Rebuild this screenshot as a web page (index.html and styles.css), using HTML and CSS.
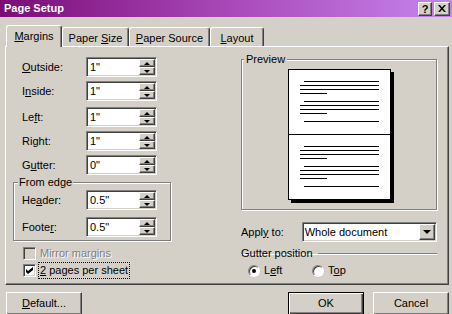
FILE: index.html
```html
<!DOCTYPE html>
<html lang="en">
<head>
    <meta charset="UTF-8">
    <meta name="viewport" content="width=device-width, initial-scale=1.0">
    <title>Page Setup</title>
    <link rel="stylesheet" href="styles.css">
</head>
<body>
    <div class="titlebar">
        <span class="title">Page Setup</span>
        <div class="caption-buttons">
            <span class="caption-btn help">?</span>
            <span class="caption-btn close">
                <svg width="8" height="7" viewBox="0 0 8 7"><path d="M0 0h2l2 2.5L6 0h2L5 3.5 8 7H6L4 4.5 2 7H0l3-3.5z" fill="#000"/></svg>
            </span>
        </div>
    </div>

    <div class="tabs">
        <div class="tab active tab-margins"><u>M</u>argins</div>
        <div class="tab tab-size">Paper <u>S</u>ize</div>
        <div class="tab tab-source"><u>P</u>aper Source</div>
        <div class="tab tab-layout"><u>L</u>ayout</div>
    </div>

    <div class="panel">
        <!-- Left column: margin fields -->
        <div class="col-left">
            <div class="field">
                <label><u>O</u>utside:</label>
                <div class="spin"><span class="spin-value">1"</span><span class="spin-btns"><span class="up"></span><span class="down"></span></span></div>
            </div>
            <div class="field">
                <label>I<u>n</u>side:</label>
                <div class="spin"><span class="spin-value">1"</span><span class="spin-btns"><span class="up"></span><span class="down"></span></span></div>
            </div>
            <div class="field field-wide">
                <label>Le<u>f</u>t:</label>
                <div class="spin"><span class="spin-value">1"</span><span class="spin-btns"><span class="up"></span><span class="down"></span></span></div>
            </div>
            <div class="field">
                <label>Ri<u>g</u>ht:</label>
                <div class="spin"><span class="spin-value">1"</span><span class="spin-btns"><span class="up"></span><span class="down"></span></span></div>
            </div>
            <div class="field">
                <label>G<u>u</u>tter:</label>
                <div class="spin"><span class="spin-value">0"</span><span class="spin-btns"><span class="up"></span><span class="down"></span></span></div>
            </div>

            <fieldset class="group from-edge">
                <legend>From edge</legend>
                <div class="field">
                    <label>He<u>a</u>der:</label>
                    <div class="spin"><span class="spin-value">0.5"</span><span class="spin-btns"><span class="up"></span><span class="down"></span></span></div>
                </div>
                <div class="field field-footer">
                    <label>Foote<u>r</u>:</label>
                    <div class="spin"><span class="spin-value">0.5"</span><span class="spin-btns"><span class="up"></span><span class="down"></span></span></div>
                </div>
            </fieldset>

            <div class="check disabled">
                <span class="box"></span>
                <span class="check-label">Mirror margins</span>
            </div>
            <div class="check">
                <span class="box">
                    <svg width="7" height="7" viewBox="0 0 7 7"><path d="M0 2l2 2 5-4v3L2 7 0 5z" fill="#000"/></svg>
                </span>
                <span class="check-label focus"><u>2</u> pages per sheet</span>
            </div>
        </div>

        <!-- Right column: preview and options -->
        <div class="col-right">
            <fieldset class="group preview">
                <legend>Preview</legend>
                <div class="page">
                    <div class="half">
                        <div class="para"><div class="ln indent"></div><div class="ln"></div><div class="ln"></div><div class="ln short"></div></div>
                        <div class="para"><div class="ln indent"></div><div class="ln"></div><div class="ln"></div><div class="ln short"></div></div>
                        <div class="para"><div class="ln indent"></div></div>
                    </div>
                    <div class="half">
                        <div class="para"><div class="ln indent"></div><div class="ln"></div><div class="ln"></div><div class="ln short"></div></div>
                        <div class="para"><div class="ln indent"></div><div class="ln"></div><div class="ln"></div><div class="ln short"></div></div>
                        <div class="para"><div class="ln indent"></div></div>
                    </div>
                </div>
            </fieldset>

            <div class="apply">
                <label>Appl<u>y</u> to:</label>
                <div class="select">
                    <span class="select-value">Whole document</span>
                    <span class="drop-btn"></span>
                </div>
            </div>

            <fieldset class="gutter-pos">
                <legend>Gutter position</legend>
                <div class="radios">
                    <div class="radio-item"><span class="radio checked"></span><span>L<u>e</u>ft</span></div>
                    <div class="radio-item"><span class="radio"></span><span>T<u>o</u>p</span></div>
                </div>
            </fieldset>
        </div>
    </div>

    <div class="footer">
        <button class="btn"><u>D</u>efault...</button>
        <button class="btn btn-default">OK</button>
        <button class="btn btn-cancel">Cancel</button>
    </div>
</body>
</html>
```

FILE: styles.css
```css
* {
    box-sizing: border-box;
}

body {
    margin: 0;
    width: 452px;
    height: 314px;
    overflow: hidden;
    background: #d4d0c8;
    font-family: "Liberation Sans", Arial, sans-serif;
    font-size: 11px;
    line-height: 13px;
    color: #000;
}

/* Title bar */
.titlebar {
    height: 17px;
    display: flex;
    align-items: center;
    justify-content: space-between;
    padding: 0 2px 0 4px;
    background: linear-gradient(90deg, #7a0c76, #a848b8 50%, #c684ec);
}

.title {
    color: #fff;
    font-weight: bold;
}

.caption-buttons {
    display: flex;
}

.caption-btn {
    width: 16px;
    height: 14px;
    display: flex;
    align-items: center;
    justify-content: center;
    background: #d4d0c8;
    border: 1px solid;
    border-color: #fff #404040 #404040 #fff;
    box-shadow: inset -1px -1px #808080;
    font-weight: bold;
    line-height: 12px;
}

.caption-btn.help {
    width: 14px;
    margin-right: 2px;
}

/* Tabs */
.tabs {
    display: flex;
    align-items: flex-end;
    height: 29px;
    padding-left: 6px;
}

.tab {
    height: 19px;
    padding-top: 4px;
    text-align: center;
    border: 1px solid;
    border-bottom: none;
    border-color: #fff #404040 transparent #fff;
    border-radius: 3px 3px 0 0;
    box-shadow: inset -1px 0 #808080;
}

.tab.active {
    height: 22px;
    margin-bottom: -1px;
    position: relative;
    z-index: 1;
    background: #d4d0c8;
}

.tab-margins { width: 56px; }
.tab-size { width: 67px; }
.tab-source { width: 81px; }
.tab-layout { width: 54px; }

/* Tab page */
.panel {
    height: 239px;
    margin: 0 3px 0 5px;
    padding: 6px 0 0 7px;
    border: 1px solid;
    border-color: #fff #404040 #404040 #fff;
    box-shadow: inset -1px -1px #808080;
    display: grid;
    grid-template-columns: 158px 196px;
    column-gap: 70px;
    align-items: start;
}

.col-left {
    margin-top: 4px;
}

.field {
    display: flex;
    align-items: center;
    height: 20px;
    padding-left: 9px;
}

.field + .field {
    margin-top: 4px;
}

.field.field-wide {
    margin-top: 6px;
}

.field label {
    width: 64px;
}

/* Spin box */
.spin {
    width: 71px;
    height: 20px;
    padding: 1px;
    display: flex;
    background: #fff;
    border: 1px solid;
    border-color: #808080 #fff #fff #808080;
    box-shadow: inset 1px 1px #404040, inset -1px -1px #d4d0c8;
}

.spin-value {
    flex: 1;
    padding: 2px 0 0 2px;
}

.spin-btns {
    width: 16px;
    display: flex;
    flex-direction: column;
}

.spin-btns span {
    flex: 1;
    display: flex;
    align-items: center;
    justify-content: center;
    background: #d4d0c8;
    border: 1px solid;
    border-color: #fff #404040 #404040 #fff;
    box-shadow: inset -1px -1px #808080;
}

.spin-btns .up::after,
.spin-btns .down::after {
    content: "";
    border-left: 3px solid transparent;
    border-right: 3px solid transparent;
}

.spin-btns .up::after {
    border-bottom: 3px solid #000;
}

.spin-btns .down::after {
    border-top: 3px solid #000;
}

/* Group boxes */
.group {
    margin: 0;
    border: 1px solid #808080;
    box-shadow: inset 1px 1px #fff, 1px 1px #fff;
}

.group legend {
    padding: 0 1px;
    background: #d4d0c8;
}

.from-edge {
    margin-top: 1px;
    padding: 1px 0 3px 4px;
}

.from-edge .field {
    padding-left: 4px;
}

.from-edge .field.field-footer {
    margin-top: 7px;
}

/* Check boxes */
.check {
    display: flex;
    align-items: center;
    height: 17px;
    padding-left: 10px;
}

.from-edge + .check {
    margin-top: 4px;
}

.check .box {
    width: 13px;
    height: 13px;
    display: flex;
    align-items: center;
    justify-content: center;
    background: #fff;
    border: 1px solid;
    border-color: #808080 #fff #fff #808080;
    box-shadow: inset 1px 1px #404040, inset -1px -1px #d4d0c8;
}

.check-label {
    margin-left: 4px;
}

.check.disabled .box {
    background: #d4d0c8;
}

.check.disabled .check-label {
    color: #808080;
    text-shadow: 1px 1px #fff;
}

.check-label.focus {
    margin-left: 2px;
    padding: 1px 1px;
    border: 1px dotted #000;
}

/* Preview */
.preview {
    padding: 3px 2px 9px;
}

.preview legend {
    padding: 0 2px;
}

.page {
    width: 103px;
    margin: 0 auto;
    background: #fff;
    border: 1px solid #000;
    box-shadow: 3px 3px 0 #000;
}

.half {
    height: 64px;
    padding: 11px 0 0 11px;
}

.half + .half {
    height: 65px;
    border-top: 1px solid #000;
}

.para + .para {
    margin-top: 7px;
}

.ln {
    width: 79px;
    height: 1px;
    background: #000;
}

.ln + .ln {
    margin-top: 3px;
}

.ln.indent {
    width: 75px;
    margin-left: 4px;
}

.ln.short {
    width: 27px;
}

/* Apply to */
.apply {
    display: flex;
    align-items: center;
    margin-top: 12px;
}

.apply label {
    width: 61px;
}

.select {
    width: 136px;
    height: 20px;
    padding: 1px;
    display: flex;
    background: #fff;
    border: 1px solid;
    border-color: #808080 #fff #fff #808080;
    box-shadow: inset 1px 1px #404040, inset -1px -1px #d4d0c8;
}

.select-value {
    flex: 1;
    padding: 2px 0 0 1px;
}

.drop-btn {
    width: 16px;
    display: flex;
    align-items: center;
    justify-content: center;
    background: #d4d0c8;
    border: 1px solid;
    border-color: #fff #404040 #404040 #fff;
    box-shadow: inset -1px -1px #808080;
}

.drop-btn::after {
    content: "";
    border-left: 4px solid transparent;
    border-right: 4px solid transparent;
    border-top: 4px solid #000;
}

/* Gutter position */
.gutter-pos {
    margin: 5px 0 0;
    padding: 0;
    border: none;
    border-top: 1px solid #808080;
    box-shadow: inset 0 1px #fff;
}

.gutter-pos legend {
    padding: 0 5px 0 0;
}

.radios {
    display: flex;
    margin-top: 4px;
    padding-left: 7px;
}

.radio-item {
    display: flex;
    align-items: center;
    width: 64px;
    gap: 4px;
}

.radio {
    width: 12px;
    height: 12px;
    display: flex;
    align-items: center;
    justify-content: center;
    border-radius: 50%;
    background: #fff;
    border: 1px solid;
    border-color: #808080 #fff #fff #808080;
    box-shadow: inset 1px 1px #404040;
}

.radio.checked::after {
    content: "";
    width: 4px;
    height: 4px;
    border-radius: 50%;
    background: #000;
}

/* Dialog buttons */
.footer {
    display: flex;
    padding: 7px 3px 0 6px;
}

.btn {
    width: 76px;
    height: 23px;
    padding: 0;
    font: inherit;
    color: #000;
    background: #d4d0c8;
    border: 1px solid;
    border-color: #fff #404040 #404040 #fff;
    box-shadow: inset -1px -1px #808080;
}

.btn-default {
    margin-left: auto;
    border-color: #000;
    box-shadow: inset 1px 1px #fff, inset -1px -1px #404040, inset -2px -2px #808080;
}

.btn-cancel {
    margin-left: 9px;
}
```
